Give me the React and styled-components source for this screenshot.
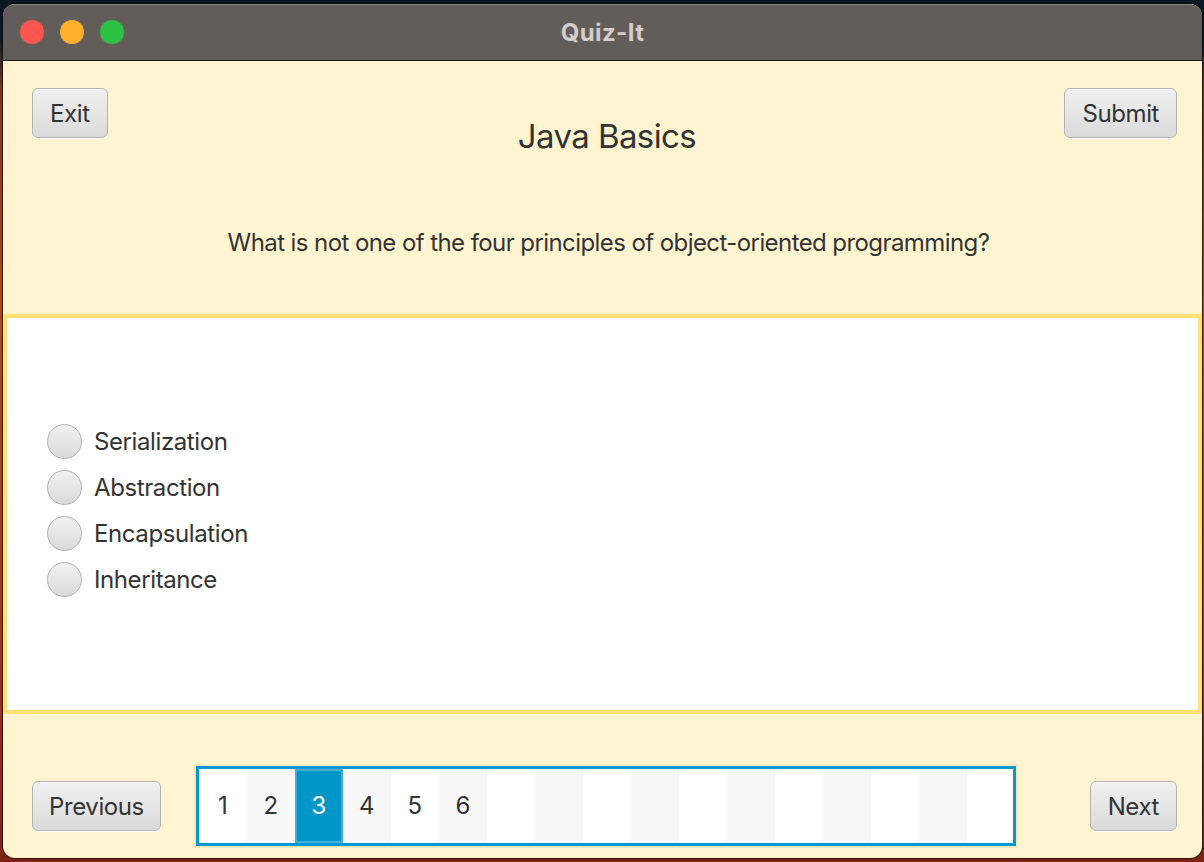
import React from "react";
import styled, { createGlobalStyle } from "styled-components";

const Global = createGlobalStyle`
  html, body { margin: 0; padding: 0; }
  body {
    width: 1204px;
    height: 862px;
    overflow: hidden;
    background: linear-gradient(180deg, #0a1722 0px, #0d1b26 40px, #7a3a18 90px, #a24b1c 300px, #9a3e1a 600px, #7b2416 862px);
    font-family: "Inter", "Noto Sans", sans-serif;
  }
`;

const Window = styled.div`
  margin: 4px 0 0 3px;
  width: 1199px;
  height: 854px;
  border-radius: 12px;
  overflow: hidden;
  display: flex;
  flex-direction: column;
  background: #fef5d0;
  box-shadow: 0 0 0 1px rgba(0, 0, 0, 0.6);
`;

const TitleBar = styled.div`
  position: relative;
  height: 56px;
  flex: none;
  background: #625d59;
  border-bottom: 1px solid #1c1a19;
  display: flex;
  align-items: center;
  padding-left: 17px;
  gap: 16px;
  box-shadow: inset 0 1px 0 rgba(255, 255, 255, 0.25);
`;

const Light = styled.span`
  width: 24px;
  height: 24px;
  border-radius: 50%;
  background: ${(p) => p.$c};
`;

const WindowTitle = styled.div`
  position: absolute;
  left: 0;
  right: 0;
  top: 0;
  bottom: 0;
  display: flex;
  align-items: center;
  justify-content: center;
  color: #d3cecb;
  font-weight: 700;
  font-size: 24px;
  letter-spacing: 0.4px;
  pointer-events: none;
`;

const Header = styled.div`
  height: 253px;
  flex: none;
  display: flex;
  flex-direction: column;
  padding: 27px 25px 0 29px;
  box-sizing: border-box;
`;

const TopRow = styled.div`
  display: grid;
  grid-template-columns: 1fr auto 1fr;
  align-items: start;
  & > :first-child { justify-self: start; }
  & > :last-child { justify-self: end; }
`;

const Button = styled.button`
  height: 50px;
  padding: 0 ${(p) => p.$px || 14}px;
  border: 1.5px solid #b3b3b3;
  border-radius: 6px;
  background: linear-gradient(180deg, #f0f0f0 0%, #e6e6e6 50%, #dadada 100%);
  box-shadow: 0 1px 0 #ffffff, inset 0 1px 0 #fafafa;
  font-family: "Inter", "Noto Sans", sans-serif;
  font-size: 24px;
  letter-spacing: -0.4px;
  color: #333333;
  cursor: pointer;
  box-sizing: border-box;
`;

const Title = styled.h1`
  margin: 0;
  padding-top: 28px;
  padding-left: 5px;
  text-align: center;
  font-weight: 400;
  font-size: 33px;
  letter-spacing: -0.6px;
  color: #333333;
  line-height: 40px;
`;

const Question = styled.p`
  margin: 72px 0 0 0;
  text-align: center;
  font-size: 24px;
  letter-spacing: -0.58px;
  color: #333333;
  line-height: 30px;
  padding-left: 8px;
`;

const Panel = styled.div`
  height: 400px;
  flex: none;
  box-sizing: border-box;
  background: #ffffff;
  border: 4px solid #ffe273;
  display: flex;
  flex-direction: column;
  justify-content: center;
  padding: 0 0 8px 40px;
  gap: 12px;
`;

const Option = styled.label`
  display: flex;
  align-items: center;
  gap: 12px;
  height: 34px;
  font-size: 24px;
  letter-spacing: -0.4px;
  color: #333333;
  cursor: pointer;
`;

const Radio = styled.span`
  width: 35px;
  height: 35px;
  box-sizing: border-box;
  border-radius: 50%;
  border: 1.5px solid #b1b1b1;
  background: linear-gradient(180deg, #f1f1f1 0%, #e4e4e4 60%, #d9d9d9 100%);
  flex: none;
`;

const Footer = styled.div`
  flex: 1;
  display: flex;
  align-items: center;
  padding: 52px 25px 12px 29px;
  box-sizing: border-box;
`;

const Pager = styled.div`
  margin-left: 35px;
  width: 820px;
  height: 80px;
  box-sizing: border-box;
  border: 3px solid #0098d4;
  background: #ffffff;
  display: flex;
  overflow: hidden;
  box-shadow: 0 0 0 2px rgba(240, 230, 180, 0.8);
`;

const Cell = styled.div`
  width: 48px;
  flex: none;
  box-sizing: border-box;
  display: flex;
  align-items: center;
  justify-content: center;
  font-size: 24px;
  color: ${(p) => (p.$active ? "#ffffff" : "#333333")};
  background: ${(p) => (p.$active ? "#0096c8" : p.$alt ? "#f8f8f8" : "#ffffff")};
  border: ${(p) => (p.$active ? "2px solid #3eafdb" : "none")};
  padding-bottom: 2px;
`;

const NextButton = styled(Button)`
  margin-left: auto;
`;

const options = ["Serialization", "Abstraction", "Encapsulation", "Inheritance"];

export default function App() {
  const cells = Array.from({ length: 17 }, (_, i) => i);
  return (
    <>
      <Global />
      <Window>
        <TitleBar>
          <Light $c="#ff5450" />
          <Light $c="#ffb12e" />
          <Light $c="#2ec043" />
          <WindowTitle>Quiz-It</WindowTitle>
        </TitleBar>
        <Header>
          <TopRow>
            <Button $px={17}>Exit</Button>
            <Title>Java Basics</Title>
            <Button $px={17}>Submit</Button>
          </TopRow>
          <Question>What is not one of the four principles of object-oriented programming?</Question>
        </Header>
        <Panel>
          {options.map((o) => (
            <Option key={o}>
              <Radio />
              {o}
            </Option>
          ))}
        </Panel>
        <Footer>
          <Button $px={16}>Previous</Button>
          <Pager>
            {cells.map((i) => (
              <Cell key={i} $alt={i % 2 === 1} $active={i === 2}>
                {i < 6 ? i + 1 : ""}
              </Cell>
            ))}
          </Pager>
          <NextButton $px={17}>Next</NextButton>
        </Footer>
      </Window>
    </>
  );
}
